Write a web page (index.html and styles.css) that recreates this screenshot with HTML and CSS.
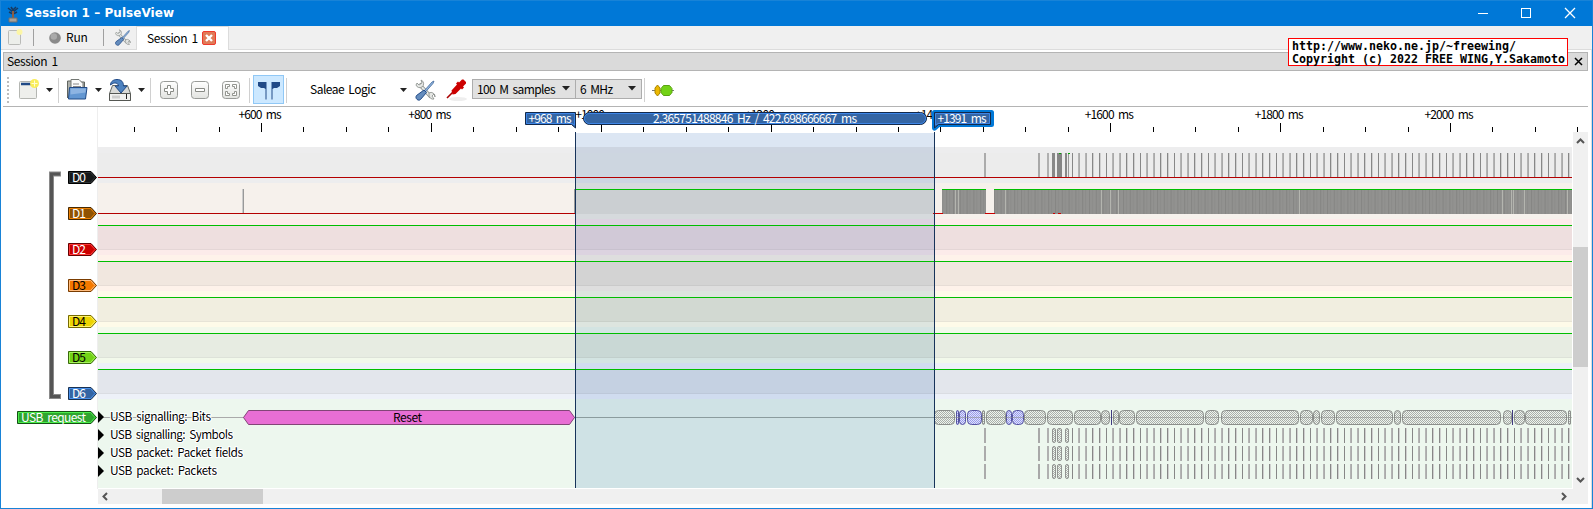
FILE: index.html
```
<!DOCTYPE html>
<html lang="en">
<head>
<meta charset="utf-8">
<title>Session 1 – PulseView</title>
<link rel="stylesheet" href="styles.css">
</head>
<body>
<div class="window">
  <header class="titlebar">
    <svg class="app-icon" width="14" height="18" viewBox="0 0 14 18"><path d="M7 15V5M7 7L2 3M7 7l5-4M7 5L5 2M7 5l3-3M3 7l4 2 4-2" stroke="#173a61" stroke-width="1.6" fill="none"/><path d="M7 6v8" stroke="#8c5d42" stroke-width="2"/><path d="M3 13h8v4H3z" fill="#a7a29b" stroke="#6d6f70"/></svg>
    <h1 class="title">Session 1 – PulseView</h1>
    <svg class="caption" width="140" height="25" viewBox="0 0 140 25" fill="none"><path d="M18 12.500h10" stroke="#fff"/><rect x="61.500" y="7.500" width="9" height="9" stroke="#fff"/><path d="M105 7l10 10M115 7l-10 10" stroke="#fff" stroke-width="1.300"/></svg>
  </header>
  <nav class="tabs">
    <svg class="t-new" width="16" height="17" viewBox="0 0 16 17"><rect x="1.500" y="1.500" width="12" height="14" rx="1" fill="#eceeea" stroke="#b9bab7"/><circle cx="12.500" cy="3" r="3" fill="#fcf6a6"/></svg>
    <i class="tsep"></i>
    <svg class="t-run" width="14" height="14" viewBox="0 0 14 14"><circle cx="7" cy="7" r="5.800" fill="#8a8a8a"/><circle cx="5.800" cy="5.500" r="3.200" fill="#aaa"/></svg>
    <span class="run">Run</span>
    <i class="tsep two"></i>
    <svg class="t-tools" width="17" height="17" viewBox="0 0 22 22"><use href="#tools"/></svg>
    <div class="tab"><span>Session 1</span><svg width="14" height="14" viewBox="0 0 14 14"><rect x=".5" y=".5" width="13" height="13" rx="1.500" fill="#e07a57" stroke="#ef3a2b"/><path d="M4 4l6 6M10 4l-6 6" stroke="#fff" stroke-width="2.400"/></svg></div>
  </nav>
  <main class="dock">
    <div class="dock-title"><span>Session 1</span><svg width="9" height="9" viewBox="0 0 9 9"><path d="M1 1l7 7M8 1l-7 7" stroke="#000" stroke-width="1.500"/></svg></div>
    <div class="toolbar">
      <svg class="tools-row" width="300" height="34" viewBox="3 72 300 34">
        <defs>
          <g id="tools"><path d="M5 5l12 13" stroke="#858a86" stroke-width="3.600"/><path d="M5 5l12 13" stroke="#e9ebe8" stroke-width="2"/><path d="M2 6a4 4 0 0 0 6 2 4 4 0 0 0-1-7l1 3-3 2-2-2zM15 16a4 4 0 0 0 5 4l-2-3 2-2 1 3a4 4 0 0 0-6-4z" fill="#e5e7e5" stroke="#858a86" stroke-width=".8"/><path d="M10 12l8-9 2-1-1 2.500-8 9z" fill="#8fb3dd" stroke="#44699a" stroke-width=".8"/><path d="M10 11l2.500 2.500-6 7c-2 2-6-1-4-4z" fill="#648cbd" stroke="#204a87"/></g>
          <linearGradient id="btn" x2="0" y2="1"><stop stop-color="#fff"/><stop offset="1" stop-color="#e2e3e0"/></linearGradient>
        </defs>
        <path d="M8 77v27" stroke="#bdbdbd" stroke-width="2" stroke-dasharray="2 2"/>
        <rect x="19.500" y="81.500" width="17" height="17" rx="1" fill="#eeefec" stroke="#b4b6b2"/><path d="M21 84h12" stroke="#204a87" stroke-width="2.500"/><circle cx="34.500" cy="83.500" r="4.500" fill="#f9ed5c"/><path d="M34.500 80.500v6M31.500 83.500h6" stroke="#fffdd3"/>
        <g fill="#222"><path d="M46 88h7l-3.500 4zM95 88h7l-3.500 4zM138 88h7l-3.500 4z"/></g>
        <path d="M58.500 78v25M150.500 78v25M249.500 78v25M286.500 78v25" stroke="#d0d0d0"/>
        <path d="M67.500 98V81h5l1-1h4l2 2h5v5" fill="#aeb1ac" stroke="#60645f"/><path d="M71 91V79.500h8l4 4V91z" fill="#fafafa" stroke="#747874"/><path d="M73 84h6M73 86.500h8" stroke="#888"/><path d="M69.500 87.500h17.500L85.500 99h-17z" fill="#6397d2" stroke="#204a87"/><path d="M70.500 88.500h15.500l-.5 4-15 2z" fill="#8db4e2"/>
        <path d="M112.500 85.500h15l3 8v7h-21v-7z" fill="#d9dad7" stroke="#656965"/><path d="M109.500 93.500h21v7h-21z" fill="#f1f1ef" stroke="#555753"/><path d="M113 95.500v3M115 95.500v3M117 95.500v3M119 95.500v3" stroke="#aaa"/><path d="M126.500 94v5" stroke="#222"/><path d="M110.500 85c0-3.500 3-5.500 6.500-5.500 4.500 0 6.500 2.500 6.500 6.500h3.500l-6 7-6-7h3.500c0-3-4-4.500-8-1z" fill="#4d82c0" stroke="#204a87"/>
        <g fill="url(#btn)" stroke="#999b98"><rect x="160.500" y="81.500" width="17" height="17" rx="3"/><rect x="191.500" y="81.500" width="17" height="17" rx="3"/><rect x="222.500" y="81.500" width="17" height="17" rx="3"/></g>
        <path d="M167.500 85.500h3v3h3v3h-3v3h-3v-3h-3v-3h3zM195.500 88.500h9v3h-9z" fill="#fff" stroke="#888a85"/>
        <path d="M225.500 84.500h4v2h-2v2h-2zM236.500 84.500h-4v2h2v2h2zM225.500 95.500h4v-2h-2v-2h-2zM236.500 95.500h-4v-2h2v-2h2z" fill="#fff" stroke="#888a85" stroke-width=".9"/>
        <rect x="253.500" y="75.500" width="30" height="28" fill="#cce8ff" stroke="#90c8f6"/>
        <path d="M258 82h8.500v17.500h-1V89l-1.500-1h-3l-3-2zM280 82h-8.500v17.500h1V89l1.500-1h3l3-2z" fill="#204a87"/>
      </svg>
      <span class="device">Saleae Logic</span>
      <svg class="device-tools" width="72" height="34" viewBox="398 72 72 34"><path d="M400 88h7l-3.500 4z" fill="#222"/><g transform="translate(414 79)"><use href="#tools"/></g><ellipse cx="458" cy="99" rx="9" ry="2" fill="#eee"/><path d="M447 98l9-9" stroke="#a00" stroke-width="1.600"/><path d="M451.500 90.500l5.500-6-1-1 2-2 1 1 3-3h1.500l2.500 2.500v1.500l-3 3 1 1-2 2-1-1-5.500 5.500-3 .500z" fill="#c00"/></svg>
      <div class="combo samples"><span>100 M samples</span><svg width="8" height="5" viewBox="0 0 8 5"><path d="M0 0h8L4 4.500z" fill="#222"/></svg></div>
      <div class="combo rate"><span>6 MHz</span><svg width="8" height="5" viewBox="0 0 8 5"><path d="M0 0h8L4 4.500z" fill="#222"/></svg></div>
      <svg class="decoder" width="34" height="34" viewBox="642 72 34 34"><path d="M644.500 78v24" stroke="#d0d0d0"/><path d="M652 90.500h22" stroke="#777"/><path d="M657.500 85l2.500 3v5l-2.500 3-2.500-3v-5z" fill="#edb800" stroke="#a78400"/><path d="M663.500 85.500h6l2.500 3v4l-2.500 3h-6l-2.500-3v-4z" fill="#73d216" stroke="#5aa312"/></svg>
    </div>
    <div class="view">
      <svg class="trace-view" id="trace" width="1570" height="382" viewBox="3 107 1570 382"></svg>
      <div class="vscroll"><svg width="9" height="6" viewBox="0 0 9 6"><path d="M1 5l3.500-3.500L8 5" stroke="#555" stroke-width="2" fill="none"/></svg><i></i><svg width="9" height="6" viewBox="0 0 9 6"><path d="M1 1l3.500 3.500L8 1" stroke="#555" stroke-width="2" fill="none"/></svg></div>
    </div>
    <div class="hscroll"><svg width="6" height="9" viewBox="0 0 6 9"><path d="M5 1L1.500 4.500 5 8" stroke="#555" stroke-width="2" fill="none"/></svg><i></i><svg width="6" height="9" viewBox="0 0 6 9"><path d="M1 1l3.500 3.500L1 8" stroke="#555" stroke-width="2" fill="none"/></svg></div>
  </main>
</div>
<aside class="notice"><div>http://www.neko.ne.jp/~freewing/</div><div>Copyright (c) 2022 FREE WING,Y.Sakamoto</div></aside>
<script src="trace.js"></script>
</body>
</html>
```
FILE: styles.css
```
* { box-sizing: border-box; }
body { margin: 0; background: #fff; font: 12px/16px "Noto Sans CJK JP", "Noto Sans", sans-serif; color: #000; overflow: hidden; }
svg { display: block; flex: none; }
span { white-space: nowrap; }
.window { width: 1593px; height: 509px; display: flex; flex-direction: column; border: 1px solid #1883d7; background: #fff; }
.titlebar { height: 25px; background: #0078d7; display: flex; align-items: center; flex: none; }
.app-icon { margin: 0 0 0 5px; }
.title { margin: 0 auto 2px 5px; color: #fff; font: bold 12px/20px "DejaVu Sans", sans-serif; letter-spacing: 0.05px; }
.caption { width: 140px; margin-right: -8px; }
.tabs { height: 24px; background: #f0f0f0; border-bottom: 1px solid #dcdcdc; display: flex; align-items: center; flex: none; }
.t-new { margin-left: 6px; }
.tsep { width: 1px; height: 17px; background: #a0a0a0; margin-left: 10px; }
.t-run { margin-left: 14px; }
.run { margin-left: 4px; width: 20px; padding-bottom: 2px; letter-spacing: -0.2px; }
.tsep.two { margin-left: 17px; }
.t-tools { margin-left: 10px; }
.tab { display: flex; align-items: center; align-self: stretch; justify-content: space-between; width: 93px; margin: 0 0 -1px 5px; padding: 0 12px 1px 10px; background: #fff; border: 1px solid #dcdcdc; border-bottom: 0; letter-spacing: -0.4px; word-spacing: 2px; }
.tab span { padding-bottom: 1px; }
.dock { flex: 1; display: flex; flex-direction: column; padding: 2px 3px 0 2px; border-right: 1px solid #ddd; min-height: 0; }
.dock-title { height: 19px; flex: none; display: flex; align-items: center; justify-content: space-between; padding: 0 4px 0 3px; background: #dadada; border: 1px solid #b4b4b4; letter-spacing: -0.4px; word-spacing: 2px; }
.dock-title span { padding-bottom: 1px; }
.toolbar { height: 36px; flex: none; display: flex; align-items: center; border-bottom: 1px solid #b4b4b4; letter-spacing: -0.6px; word-spacing: 2px; }
.device { width: 88px; margin-left: 7px; letter-spacing: -0.5px; }
.combo { display: flex; align-items: center; justify-content: space-between; height: 20px; padding: 0 5px 0 4px; background: #e1e1e1; border: 1px solid #adadad; }
.samples { width: 104px; margin-left: 2px; }
.rate { width: 67px; margin-left: -1px; }
.view { display: flex; flex: none; height: 382px; }
.trace-view { overflow: visible; position: relative; }
.vscroll { width: 15px; height: 357px; margin-top: 25px; padding: 6px 0; display: flex; flex-direction: column; align-items: center; background: #f0f0f0; }
.vscroll i { width: 15px; height: 120px; margin: 103px 0 auto; background: #cdcdcd; }
.hscroll { height: 15px; margin: 0 0 0 95px; padding: 0 6px 0 4px; flex: none; display: flex; align-items: center; background: #f0f0f0; width: 1490px; }
.hscroll i { width: 101px; height: 15px; margin: 0 auto 0 54px; background: #cdcdcd; }
.hscroll svg:last-child { margin-right: 15px; }
.notice { position: absolute; left: 1288px; top: 38px; width: 280px; height: 28px; border: 1px solid red; background: #fff; padding: 1px 3px; font: bold 11.63px/13px "DejaVu Sans Mono", monospace; white-space: nowrap; }
.trace-view text { font-size: 12px; word-spacing: 2.5px; }
.halo { stroke: #fff; stroke-width: 2px; paint-order: stroke; }
```
FILE: trace.js
```
const out = [];
const rect = (x, y, w, h, fill, extra = '') => out.push(`<rect x="${x}" y="${y}" width="${w}" height="${h}" fill="${fill}" ${extra}/>`);
const path = (d, fill, extra = '') => out.push(`<path d="${d}" fill="${fill}" ${extra}/>`);
const text = (s, x, y, w, fill = '#000', extra = '') => out.push(`<text x="${x}" y="${y}" textLength="${w}" fill="${fill}" ${extra}>${s}</text>`);
const X0 = 98, X1 = 1572;

out.push('<defs><pattern id="hatch" width="2" height="2" patternUnits="userSpaceOnUse"><rect width="2" height="2" fill="#eef5ee"/><path d="M0 0h1v1H0zM1 1h1v1H1z" fill="#aaaeaa"/></pattern><pattern id="blue" width="2" height="2" patternUnits="userSpaceOnUse"><rect width="2" height="2" fill="#dfe4fa"/><path d="M0 0h1v1H0zM1 1h1v1H1z" fill="#9a9aec"/></pattern><pattern id="busy" width="6.8" height="30" patternUnits="userSpaceOnUse"><rect width="6.8" height="30" fill="#929290"/><rect x="1" width="1" height="30" fill="#858583"/><rect x="4" width="1" height="30" fill="#8b8b89"/></pattern></defs>');

// Time ruler
for (let i = -3; i < 32; i++) {
  const x = Math.floor(261.5 + i * 42.465);
  const major = i % 4 === 0;
  if (x < X1 + 8) rect(x, major ? 123 : 127, 1, major ? 9 : 5, '#000');
}
[600, 800, 1000, 1200, 1400, 1600, 1800, 2000].forEach((v, i) => {
  const w = v < 1000 ? 43 : 49;
  text(`+${v} ms`, 261 + i * 169.86 - w / 2 - 1, 119, w);
});

// Channel bands: background, level fill, and both inside the cursor selection
const bands = [
  ['#ededee', '#ececec', '#cdd5e1', '#cdd6e0'],
  ['#f6f1ec', '#f6f1ec', '#d6dadd', '#cbcfd2'],
  ['#fcebea', '#eedfdf', '#dcd3e0', '#d1c9d7'],
  ['#fef2ea', '#f1e7df', '#dedede', '#d3d3d3'],
  ['#fefbe9', '#f1eee0', '#dde5df', '#d2d9d2'],
  ['#f2f9eb', '#e7ece2', '#d3e4e2', '#c9d8d5'],
  ['#edf1f8', '#e3e6ec', '#d0dcef', '#c5d1e2']
];
bands.forEach(([bg, level, selBg, selLevel], i) => {
  const y = 147 + i * 36;
  rect(X0, y, X1 - X0, 36, bg);
  rect(X0, y + 6, X1 - X0, 25, level);
  rect(576, y, 358, 36, selBg);
  rect(576, y + 6, 358, 25, selLevel);
  if (i > 1) {
    rect(X0, y + 30, X1 - X0, 1, '#000', 'opacity=".04"');
    rect(X0, y + 6, X1 - X0, 1, '#00be00');
  }
});
rect(576, 133, 358, 14, '#dce6f3');
rect(X0, 399, X1 - X0, 89, '#edf7ee');
rect(576, 399, 358, 89, '#cfe2e5');
rect(97, 107, 1, 382, '#eeeeee');

// Packet bursts shared by D0 and the three lower decoder rows
const bursts = [[984, 2, '#ababab'], [1038, 2, '#a8a8a8'], [1047, 2, '#b0b0b0']];
for (let x = 1072, i = 0; x < 1571; i++, x = 1072 + i * 6.8) {
  const f = x - Math.floor(x);
  bursts.push([Math.floor(x), 1, f > .5 ? '#b4b4b4' : '#878787']);
  if (f > .1) bursts.push([Math.floor(x) + 1, 1, f > .5 ? '#aaa' : '#cfcfcf']);
}
bursts.forEach(([x, w, c]) => {
  rect(x, 153, w, 24, c);
  [428, 446, 464].forEach(y => rect(x, y, w, 15, c));
});
[[1052, 3, '#888'], [1057, 5, '#858585'], [1065, 2, '#888'], [1068, 1, '#999']].forEach(([x, w, c]) => rect(x, 153, w, 24, c));
rect(1059, 153, 2, 1, '#0a0'); rect(1068, 153, 2, 1, '#0a0');
[428, 446, 464].forEach(y => [[1052, 3], [1057, 4], [1065, 3]].forEach(([x, w]) => rect(x + .5, y + .5, w, 14, 'url(#hatch)', 'rx="1.5" stroke="#929492"')));

rect(X0, 177, X1 - X0, 1, '#b40000');
rect(X0, 213, 478, 1, '#b40000');
rect(242, 189, 1, 24, '#ccc'); rect(243, 189, 1, 24, '#999');
rect(574, 189, 1, 24, '#999');
rect(575, 189, 359, 1, '#00be00');
[[942, 44], [994, 578]].forEach(([x, w]) => { rect(x, 189, w, 25, 'url(#busy)'); rect(x, 189, w, 1, '#00be00'); });
[955, 958, 1005, 1101, 1110, 1118, 1299, 1502, 1511, 1513, 1524, 1567].forEach(x => rect(x, 190, 1, 24, '#b4b5af'));
rect(933, 213, 10, 1, '#c00'); rect(985, 213, 10, 1, '#c00'); rect(1053, 213, 2, 1, '#c00'); rect(1058, 213, 3, 1, '#c00');

// USB signalling bits
rect(X0, 417, 478, 1, '#aaa');
rect(576, 417, 358, 1, '#8b9c9e');
path('M243.500 417.500L248.500 410.500H569.500L574.500 417.500L569.500 424.500H248.500Z', '#e86ed4', 'stroke="#824577"');
const bits = [[933.6, 954.6], [955.5, 958, 1], [959, 965.5, 1], [966.6, 981.3, 1], [982, 985], [985.6, 1005.3], [1005.6, 1011.6, 1], [1012.3, 1024, 1], [1024.3, 1046.3], [1047.3, 1073.6], [1074.3, 1101], [1101.3, 1110.3], [1112.6, 1118.3], [1119, 1135], [1136, 1204.3], [1205.3, 1219.6], [1220.6, 1299], [1299.6, 1312.6], [1313, 1320.3], [1321, 1335.3], [1336, 1393], [1394, 1401], [1401.6, 1501], [1502.6, 1511.3], [1513.6, 1524.3], [1525, 1566.6], [1568, 1571]];
bits.forEach(([a, b, blue]) => rect(Math.round(a) + .5, 410.5, Math.max(1, Math.round(b - a) - 1), 14, blue ? 'url(#blue)' : 'url(#hatch)', `rx="${Math.min(4, (b - a) / 2)}" stroke="${blue ? '#5553a0' : '#8b8e8b'}"`));
rect(934, 417, 638, 1, '#8a8d8a', 'opacity=".55"');
rect(1111, 410, 1, 15, '#403a80'); rect(1512, 410, 1, 15, '#403a80');

text('Reset', 393, 421.5, 29);
[['USB signalling: Bits', 101], ['USB signalling: Symbols', 123], ['USB packet: Packet fields', 133], ['USB packet: Packets', 107]].forEach(([s, w], i) => {
  const y = 417 + i * 18;
  path(`M98 ${y - 6}L104 ${y}L98 ${y + 6}Z`, '#000');
  text(s, 110, y + 4, w, '#000', 'class="halo"');
});

// Cursors
rect(575, 132, 1, 356, '#17335a'); rect(934, 132, 1, 356, '#17335a');
path('M525.500 112.500H575.500V128L571.500 124.500H525.500Z', '#3465a4', 'stroke="#12294b"');
path('M526.500 113.500H574.500V125L572 123.500H526.500Z', 'none', 'stroke="#3d86e8"');
text('+968 ms', 528.5, 123, 43, '#fff');
rect(583.5, 112.5, 343, 12, '#3465a4', 'rx="6" stroke="#12294b"');
rect(584.5, 113.5, 341, 10, 'none', 'rx="5" stroke="#3d86e8"');
text('2.365751488846 Hz / 422.698666667 ms', 653, 123, 204, '#fff');
path('M934.500 128V112.500H991.500V124.500H938.500Z', '#3465a4', 'stroke="#0078d7" stroke-width="5" stroke-linejoin="round"');
path('M934.500 128V112.500H990.500V124.500H938.500Z', '#3465a4', 'stroke="#12294b"');
path('M935.500 125V113.500H989.500V123.500H938Z', 'none', 'stroke="#3d86e8"');
text('+1391 ms', 937.5, 123, 49, '#fff');

// Channel labels and group bracket
path('M61 174H51.500V396.500H61', 'none', 'stroke="#8a8a8a" stroke-width="5"');
path('M60 174H51.500V396.500H60', 'none', 'stroke="#555" stroke-width="3"');
const tag = (s, x, y, w, fill, line, inner, color) => {
  path(`M${x + .5} ${y - 5.5}H91L96.500 ${y + .5}L91 ${y + 6.5}H${x + .5}Z`, fill, `stroke="${line}"`);
  path(`M${x + 1.5} ${y - 4.500}H90.500L95 ${y + .5}L90.500 ${y + 5.500}H${x + 1.5}Z`, 'none', `stroke="${inner}"`);
  text(s, x + 4, y + 5, w, color);
};
[['#16191a', '#000', '#2e3436', '#fff'], ['#8f5202', '#472901', '#ee8205', '#fff'], ['#cc0000', '#660000', '#ff3a3a', '#fff'], ['#f57900', '#7a3c00', '#ffbd80', '#000'], ['#edd400', '#766a00', '#fff26b', '#000'], ['#73d216', '#39690b', '#a5f35c', '#000'], ['#3465a4', '#1a3252', '#4a91ec', '#fff']].forEach((c, i) => tag('D' + i, 68, 177 + i * 36, 14, ...c));
tag('USB request', 17, 417, 65, '#2fa52f', '#145214', '#4bee4b', '#fff');

document.getElementById('trace').innerHTML = out.join('');
```
